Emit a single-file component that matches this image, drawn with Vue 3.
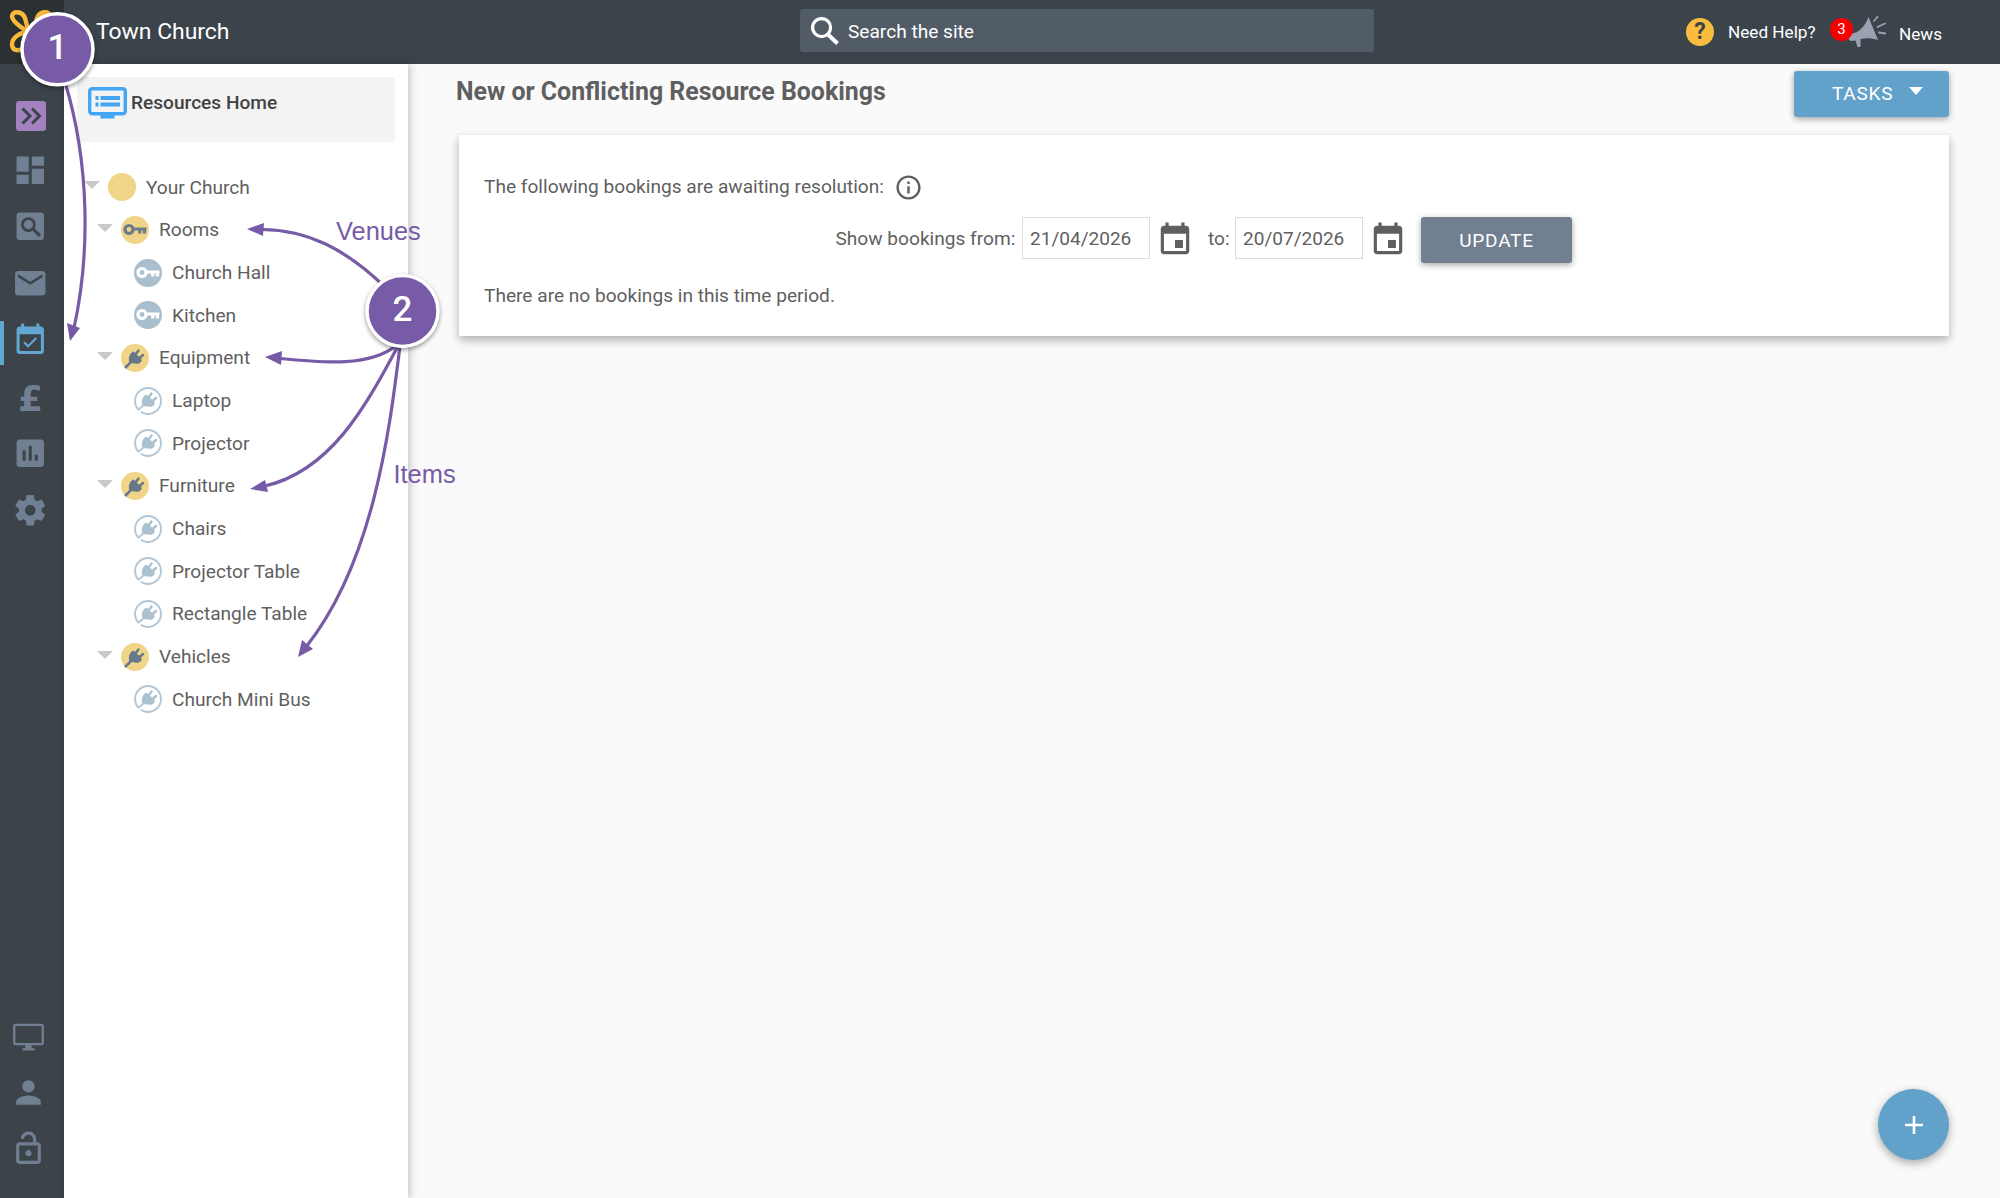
<template>
  <div class="app">
    <header class="topbar">
      <div class="logo">
        <svg width="44" height="44" viewBox="0 0 44 44" fill="none" stroke="#fbb93a" stroke-width="4.4">
          <path d="M20 22C12 18 3 11 3 6C3 1 12 1 15 6C18 11 17 16 20 22Z"/>
          <path d="M24 22C32 18 41 11 41 6C41 1 32 1 29 6C26 11 27 16 24 22Z"/>
          <path d="M20 22C11 22 3 28 3 34C3 42 11 41 15 38C18 34 18 28 20 22Z"/>
          <path d="M24 22C33 22 41 28 41 34C41 42 33 41 29 38C26 34 26 28 24 22Z"/>
        </svg>
      </div>
      <div class="site-name">Town Church</div>
      <div class="search">
        <svg width="28" height="28" viewBox="0 0 28 28" fill="none" stroke="#fff">
          <circle cx="10.6" cy="10.6" r="9" stroke-width="3.2"/>
          <path d="M17 17.5L26.5 26.5" stroke-width="4"/>
        </svg>
        <span>Search the site</span>
      </div>
      <div class="top-links">
        <span class="help-icon">?</span>
        <a class="help">Need Help?</a>
        <span class="news-icon">
          <span class="count">3</span>
          <svg width="38" height="34" viewBox="0 0 38 34">
            <path d="M1 18.5L9 16C14 13 18 8 20.5 1L30 24C24 22 17 21.5 12.5 23V31H9.5L7.5 24.5L3 25C0 24 0 21 1 18.5Z" fill="#9aa1b1"/>
            <path d="M26 5L29.5 0.8M29.5 11L37 7.5M31 16.5L37.5 17.5" stroke="#9aa1b1" stroke-width="1.8" stroke-linecap="round"/>
          </svg>
        </span>
        <a class="news">News</a>
      </div>
    </header>

    <div class="body">
      <nav class="rail">
        <div class="rail-top">
          <a v-for="item in railTop" :key="item.name" class="rail-item" :class="{ active: item.active }">
            <span v-if="item.name === 'expand'" class="expand">
              <svg width="30" height="30" viewBox="0 0 30 30" fill="none" stroke="#3c444a" stroke-width="3">
                <path d="M6.5 7.5L14 15L6.5 22.5M16 7.5L23.5 15L16 22.5"/>
              </svg>
            </span>
            <span v-else-if="item.name === 'giving'" class="pound">£</span>
            <svg v-else width="36.5" height="36.5" viewBox="0 0 24 24" fill="currentColor">
              <path :d="item.path"/>
            </svg>
          </a>
        </div>
        <div class="rail-bottom">
          <a v-for="item in railBottom" :key="item.name" class="rail-item">
            <svg width="37" height="37" viewBox="0 0 24 24" fill="currentColor">
              <path :d="item.path"/>
            </svg>
          </a>
        </div>
      </nav>

      <aside class="tree-panel">
        <a class="home">
          <svg width="39" height="32" viewBox="0 0 39 32">
            <rect x="1.7" y="1.7" width="35.6" height="25" rx="2.5" fill="none" stroke="#42a5f5" stroke-width="3.4"/>
            <path d="M12.5 27H26.5V31.5H12.5ZM7.5 9H10.5V13H7.5ZM12.5 9H32V13H12.5ZM7.5 15.5H10.5V19.5H7.5ZM12.5 15.5H32V19.5H12.5Z" fill="#42a5f5"/>
          </svg>
          <span>Resources Home</span>
        </a>
        <ul class="tree">
          <li v-for="node in tree" :key="node.label" :class="'level-' + node.level">
            <span v-if="node.level < 2" class="toggle"></span>
            <svg class="node-icon" width="28" height="28" viewBox="0 0 28 28">
              <template v-if="node.icon === 'plug' && node.level === 2">
                <circle cx="14" cy="14" r="13" fill="none" stroke="#b3c8d6" stroke-width="1.9" stroke-dasharray="77.5 4.18" transform="rotate(139 14 14)"/>
                <path d="M4 23L10.5 17.5" stroke="#b3c8d6" stroke-width="2.2"/>
              </template>
              <circle v-else cx="14" cy="14" r="14" :fill="node.level === 2 ? '#a9bfce' : '#f0d588'"/>
              <g v-if="node.icon === 'key'" fill="none" :stroke="node.level === 2 ? '#fff' : '#6d7a8c'" stroke-width="3.2">
                <circle cx="8" cy="13.5" r="4"/>
                <path d="M12 13H25.5M18.8 13.5V17.5M23.5 13.5V17.5"/>
              </g>
              <g v-if="node.icon === 'plug'" :fill="node.level === 2 ? '#abc1d0' : '#69778a'" :stroke="node.level === 2 ? '#abc1d0' : '#69778a'">
                <path d="M12.5 7.5L20.5 15C21.5 18.500 17.500 20.500 14 19.500L9.500 19L8 17C7.500 14 8.500 9 12.500 7.500Z" stroke="none"/>
                <path d="M14.5 10.5L17.5 6.5M18.5 14L22 11" stroke-width="2.5" stroke-linecap="round"/>
                <path v-if="node.level < 2" d="M4 24L10.5 17.5" stroke-width="2.5"/>
              </g>
            </svg>
            <span class="label">{{ node.label }}</span>
          </li>
        </ul>
      </aside>

      <main class="content">
        <div class="heading">
          <h1>New or Conflicting Resource Bookings</h1>
          <button class="tasks">TASKS<span class="caret"></span></button>
        </div>
        <section class="card">
          <div class="intro">
            <span>The following bookings are awaiting resolution:</span>
            <svg width="29" height="29" viewBox="0 0 24 24" fill="currentColor">
              <path d="M11 7h2v2h-2zm0 4h2v6h-2zm1-9C6.48 2 2 6.48 2 12s4.48 10 10 10 10-4.48 10-10S17.52 2 12 2zm0 18c-4.41 0-8-3.59-8-8s3.59-8 8-8 8 3.59 8 8-3.59 8-8 8z"/>
            </svg>
          </div>
          <div class="filters">
            <span class="from">Show bookings from:</span>
            <span class="date">{{ from }}</span>
            <svg class="cal" width="38" height="38" viewBox="0 0 24 24" fill="currentColor"><path :d="calendarPath"/></svg>
            <span class="to">to:</span>
            <span class="date">{{ to }}</span>
            <svg class="cal" width="38" height="38" viewBox="0 0 24 24" fill="currentColor"><path :d="calendarPath"/></svg>
            <button class="update">UPDATE</button>
          </div>
          <p class="empty">There are no bookings in this time period.</p>
        </section>
        <button class="fab">
          <svg width="20" height="20" viewBox="0 0 20 20" stroke="#fff" stroke-width="2.6"><path d="M10 1V19M1 10H19"/></svg>
        </button>
      </main>
    </div>

    <!-- walkthrough callouts -->
    <svg class="callouts" width="2000" height="1198" viewBox="0 0 2000 1198">
      <g fill="none" stroke="#775ba6" stroke-width="3.2">
        <path v-for="arrow in arrows" :key="arrow.line" :d="arrow.line"/>
      </g>
      <g fill="#775ba6">
        <path v-for="arrow in arrows" :key="arrow.head" :d="arrow.head"/>
      </g>
      <g v-for="step in steps" :key="step.n" class="step">
        <circle :cx="step.x" :cy="step.y" r="35.5"/>
        <text :x="step.x" :y="step.y + 9.5">{{ step.n }}</text>
      </g>
      <text class="note" x="336" y="239.5">Venues</text>
      <text class="note" x="393.5" y="482.5">Items</text>
    </svg>
  </div>
</template>

<script setup>
import { ref } from 'vue'

const from = ref('21/04/2026')
const to = ref('20/07/2026')

const calendarPath = 'M17 12h-5v5h5v-5zM16 1v2H8V1H6v2H5c-1.11 0-1.99.9-1.99 2L3 19c0 1.1.89 2 2 2h14c1.1 0 2-.9 2-2V5c0-1.1-.9-2-2-2h-1V1h-2zm3 18H5V8h14v11z'

const railTop = [
  { name: 'expand' },
  { name: 'dashboard', path: 'M3 13h8V3H3v10zm0 8h8v-6H3v6zm10 0h8V11h-8v10zm0-18v6h8V3h-8z' },
  { name: 'search', path: 'M5 3h14a2 2 0 0 1 2 2v14a2 2 0 0 1-2 2H5a2 2 0 0 1-2-2V5a2 2 0 0 1 2-2zM10.8 6a4.9 4.9 0 1 0 2.7 9l4.2 4.1 1.5-1.5-4.3-4.2A4.9 4.9 0 0 0 10.8 6zm0 1.9a3 3 0 1 1 0 6 3 3 0 0 1 0-6z' },
  { name: 'mail', path: 'M20 4H4c-1.1 0-1.99.9-1.99 2L2 18c0 1.1.9 2 2 2h16c1.1 0 2-.9 2-2V6c0-1.1-.9-2-2-2zm0 4l-8 5-8-5V6l8 5 8-5v2z' },
  { name: 'bookings', active: true, path: 'M16.53 11.06L15.47 10l-4.88 4.88-2.12-2.12-1.06 1.06L10.59 17l5.94-5.94zM19 3h-1V1h-2v2H8V1H6v2H5c-1.11 0-1.99.9-1.99 2L3 19c0 1.1.89 2 2 2h14c1.1 0 2-.9 2-2V5c0-1.1-.9-2-2-2zm0 16H5V8h14v11z' },
  { name: 'giving' },
  { name: 'reports', path: 'M19 3H5c-1.1 0-2 .9-2 2v14c0 1.1.9 2 2 2h14c1.1 0 2-.9 2-2V5c0-1.1-.9-2-2-2zM9 17H7v-7h2v7zm4 0h-2V7h2v10zm4 0h-2v-4h2v4z' },
  { name: 'settings', path: 'M19.43 12.98c.04-.32.07-.64.07-.98s-.03-.66-.07-.98l2.11-1.65c.19-.15.24-.42.12-.64l-2-3.46c-.12-.22-.39-.3-.61-.22l-2.49 1c-.52-.4-1.08-.73-1.69-.98l-.38-2.65C14.46 2.18 14.25 2 14 2h-4c-.25 0-.46.18-.49.42l-.38 2.65c-.61.25-1.17.59-1.69.98l-2.49-1c-.23-.09-.49 0-.61.22l-2 3.46c-.13.22-.07.49.12.64l2.11 1.65c-.04.32-.07.65-.07.98s.03.66.07.98l-2.11 1.65c-.19.15-.24.42-.12.64l2 3.46c.12.22.39.3.61.22l2.49-1c.52.4 1.08.73 1.69.98l.38 2.65c.03.24.24.42.49.42h4c.25 0 .46-.18.49-.42l.38-2.65c.61-.25 1.17-.59 1.69-.98l2.49 1c.23.09.49 0 .61-.22l2-3.46c.12-.22.07-.49-.12-.64l-2.11-1.65zM12 15.5c-1.93 0-3.5-1.57-3.5-3.5s1.57-3.5 3.5-3.5 3.5 1.57 3.5 3.5-1.57 3.5-3.5 3.5z' }
]

const railBottom = [
  { name: 'screen', path: 'M20.5 3h-17A1.5 1.5 0 0 0 2 4.5v11A1.5 1.5 0 0 0 3.5 17H10v2H8v1.5h8V19h-2v-2h6.5a1.5 1.5 0 0 0 1.5-1.5v-11A1.5 1.5 0 0 0 20.5 3zm0 12.5h-17v-11h17v11z' },
  { name: 'profile', path: 'M12 12c2.21 0 4-1.79 4-4s-1.79-4-4-4-4 1.79-4 4 1.79 4 4 4zm0 2c-2.67 0-8 1.34-8 4v2h16v-2c0-2.66-5.33-4-8-4z' },
  { name: 'lock', path: 'M12 17c1.1 0 2-.9 2-2s-.9-2-2-2-2 .9-2 2 .9 2 2 2zm6-9h-1V6c0-2.76-2.24-5-5-5-2.28 0-4.27 1.54-4.84 3.75-.14.54.18 1.08.72 1.22.53.14 1.08-.18 1.22-.72C9.44 3.93 10.63 3 12 3c1.65 0 3 1.35 3 3v2H6c-1.1 0-2 .9-2 2v10c0 1.1.9 2 2 2h12c1.1 0 2-.9 2-2V10c0-1.1-.9-2-2-2zm0 12H6V10h12v10z' }
]

const tree = [
  { label: 'Your Church', level: 0 },
  { label: 'Rooms', level: 1, icon: 'key' },
  { label: 'Church Hall', level: 2, icon: 'key' },
  { label: 'Kitchen', level: 2, icon: 'key' },
  { label: 'Equipment', level: 1, icon: 'plug' },
  { label: 'Laptop', level: 2, icon: 'plug' },
  { label: 'Projector', level: 2, icon: 'plug' },
  { label: 'Furniture', level: 1, icon: 'plug' },
  { label: 'Chairs', level: 2, icon: 'plug' },
  { label: 'Projector Table', level: 2, icon: 'plug' },
  { label: 'Rectangle Table', level: 2, icon: 'plug' },
  { label: 'Vehicles', level: 1, icon: 'plug' },
  { label: 'Church Mini Bus', level: 2, icon: 'plug' }
]

const steps = [
  { n: 1, x: 57.5, y: 49.3 },
  { n: 2, x: 402.5, y: 311 }
]

const arrows = [
  { line: 'M65 82C90 165 90 255 74 328', head: 'M67 323L80 328L70 341Z' },
  { line: 'M384 286C345 249 308 230 262 229.5', head: 'M247 229L264 223L263 236Z' },
  { line: 'M397 345C370 367 325 363 280 358.5', head: 'M265 357L282 351L281 365Z' },
  { line: 'M398 346C365 408 330 471 265 486', head: 'M250 489L265 480L268 492Z' },
  { line: 'M400 346C390 425 375 560 306 647', head: 'M298 657L302 640L313 649Z' }
]
</script>

<style>
body {
  margin: 0;
  overflow: hidden;
}
</style>

<style scoped>
.app {
  position: relative;
  display: flex;
  flex-direction: column;
  width: 2000px;
  height: 1198px;
  overflow: hidden;
  background: #fafafa;
  color: #5f5f5f;
  font-family: Roboto, sans-serif;
  font-size: 19.12px;
  line-height: 24px;
  white-space: nowrap;
}

.topbar {
  display: flex;
  align-items: center;
  flex: none;
  height: 64px;
  background: #3c444b;
  color: #fff;
}

.logo {
  width: 64px;
  height: 64px;
  padding: 10px 0 0 9px;
  box-sizing: border-box;
  background: #2b3133;
}

.site-name {
  width: 704px;
  margin: -1px 0 0 32px;
  font-size: 22.9px;
}

.search {
  display: flex;
  align-items: center;
  gap: 9px;
  width: 574px;
  height: 43px;
  margin-top: -3px;
  padding-left: 11px;
  box-sizing: border-box;
  border-radius: 3px;
  background: #525c66;
}

.search span {
  margin-top: 2px;
}

.top-links {
  display: flex;
  align-items: center;
  margin-left: 312px;
  font-size: 17.15px;
}

.help-icon {
  width: 28px;
  height: 28px;
  border-radius: 50%;
  background: #fbbc3d;
  color: #3c444b;
  font-size: 23px;
  font-weight: 700;
  line-height: 28px;
  text-align: center;
}

.help {
  margin-left: 14px;
  width: 102px;
}

.news-icon {
  position: relative;
  width: 38px;
  height: 34px;
  margin-top: 2px;
  padding-left: 18px;
}

.count {
  position: absolute;
  left: 0;
  top: 2px;
  width: 23px;
  height: 23px;
  border-radius: 50%;
  background: #f80000;
  font-size: 15px;
  line-height: 23px;
  text-align: center;
}

.news {
  margin: 4px 0 0 13px;
}

.body {
  display: flex;
  flex: 1;
}

.rail {
  display: flex;
  flex-direction: column;
  justify-content: space-between;
  width: 64px;
  background: #3c444a;
  color: #717f93;
}

.rail-top {
  padding-top: 21px;
}

.rail-item {
  display: flex;
  align-items: center;
  height: 56.7px;
  padding-left: 12px;
  box-sizing: border-box;
}

.rail-item.active {
  color: #62a6d2;
  background: linear-gradient(#62a6d2, #62a6d2) 0 9px / 4px 44px no-repeat;
}

.expand {
  width: 30px;
  height: 30px;
  margin: 5px 0 0 3.5px;
  border-radius: 3px;
  background: #a281be;
}

.pound {
  width: 37px;
  margin-top: 5px;
  font-family: "DejaVu Sans", sans-serif;
  font-size: 36px;
  font-weight: 700;
  text-align: center;
}

.rail-bottom {
  padding-bottom: 22px;
}

.rail-bottom .rail-item {
  height: 55.5px;
  padding-left: 10px;
}

.tree-panel {
  width: 344px;
  box-sizing: border-box;
  padding: 13px 13px 0;
  background: #fff;
  box-shadow: 2px 0 8px rgba(0, 0, 0, 0.22);
}

.home {
  display: flex;
  align-items: flex-start;
  gap: 4px;
  height: 65px;
  padding: 10px 0 0 11px;
  box-sizing: border-box;
  border-radius: 4px;
  background: #f3f3f3;
  color: #424242;
  font-weight: 500;
}

.home span {
  margin-top: 4px;
}

.tree {
  margin: 24px 0 0;
  padding: 0;
  list-style: none;
}

.tree li {
  display: flex;
  align-items: center;
  height: 42.68px;
}

.level-0 {
  padding-left: 7px;
}

.level-1 {
  padding-left: 20px;
}

.level-2 {
  padding-left: 57px;
}

.toggle {
  width: 0;
  height: 0;
  margin: -4px 8px 0 0;
  border: 8px solid transparent;
  border-top-color: #c9c9c9;
  border-bottom: 0;
}

.node-icon {
  flex: none;
}

.label {
  margin: 0.5px 0 0 10px;
}

.content {
  display: flex;
  flex-direction: column;
  flex: 1;
  padding: 6px 51px 0;
}

.heading {
  display: flex;
  align-items: flex-start;
  justify-content: space-between;
  margin-left: -3px;
}

h1 {
  margin: 6px 0 0;
  font-size: 24.9px;
  font-weight: 700;
  line-height: 32px;
}

button {
  border: 0;
  padding: 0;
  color: #fff;
  font-family: inherit;
  font-size: 19.05px;
}

.tasks,
.update {
  height: 46px;
  border-radius: 3px;
  box-shadow: 0 2px 6px rgba(0, 0, 0, 0.35);
  letter-spacing: 0.75px;
}

.tasks {
  display: flex;
  align-items: center;
  width: 155px;
  margin-top: 1px;
  padding: 0 0 1px 38px;
  box-sizing: border-box;
  background: #62a1c9;
}

.caret {
  margin: -6px 0 0 16px;
  border: 7.5px solid transparent;
  border-top: 8px solid #fff;
  border-bottom: 0;
}

.card {
  height: 201px;
  margin-top: 18px;
  padding: 37px 25px 0;
  box-sizing: border-box;
  background: #fff;
  box-shadow: 0 4px 9px rgba(0, 0, 0, 0.3);
}

.intro {
  display: flex;
  align-items: center;
  gap: 10px;
  height: 30px;
}

.filters {
  display: flex;
  align-items: center;
  height: 46px;
  margin: 15px 0 0 351.5px;
}

.from {
  width: 186.5px;
}

.date {
  width: 128px;
  height: 42px;
  padding-left: 7px;
  margin-top: -4px;
  box-sizing: border-box;
  border: 1px solid #dcdcdc;
  font-size: 19.05px;
  line-height: 42px;
}

.cal {
  margin: -1px 0 0 6px;
}

.to {
  width: 27px;
  margin-left: 14px;
}

.from,
.to {
  margin-top: -3px;
}

.update {
  width: 151px;
  margin-left: 14px;
  padding-top: 1px;
  background: #717f91;
}

.empty {
  margin: 20.5px 0 0;
}

.fab {
  display: flex;
  align-items: center;
  justify-content: center;
  align-self: flex-end;
  width: 71px;
  height: 71px;
  margin: auto 0 38px;
  border-radius: 50%;
  background: #62a1c9;
  box-shadow: 0 3px 10px rgba(0, 0, 0, 0.35);
}

.callouts {
  position: absolute;
  left: 0;
  top: 0;
  pointer-events: none;
}

.step circle {
  fill: #775ba6;
  stroke: #fff;
  stroke-width: 3.5px;
  filter: drop-shadow(0 2px 2px rgba(0, 0, 0, 0.4));
}

.step text {
  fill: #fff;
  font-size: 35px;
  font-weight: 500;
  text-anchor: middle;
}

.note {
  fill: #775ba6;
  font-family: "Liberation Sans", sans-serif;
  font-size: 25.4px;
}
</style>
